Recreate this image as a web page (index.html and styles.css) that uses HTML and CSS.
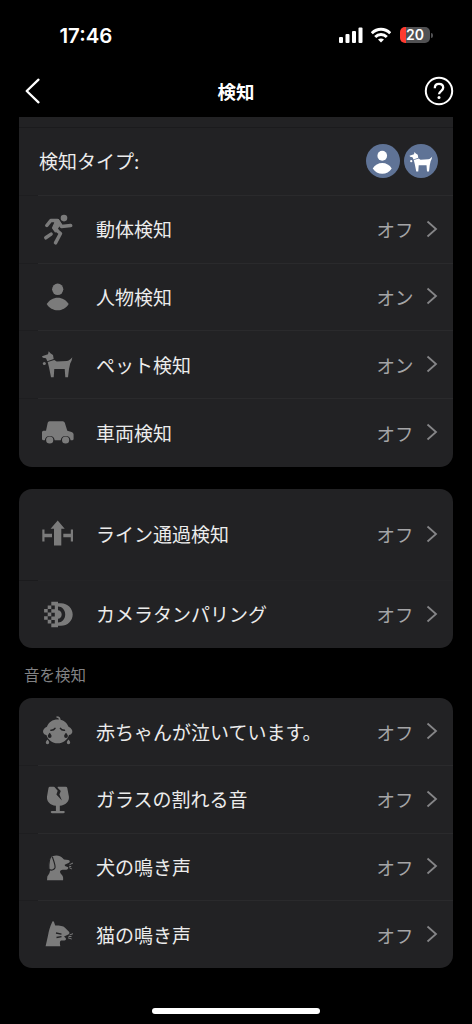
FILE: index.html
```html
<!DOCTYPE html>
<html lang="ja">
<head>
<meta charset="utf-8">
<title>検知</title>
<link rel="stylesheet" href="styles.css">
</head>
<body>
<svg class="defs" width="0" height="0">
  <symbol id="chevron" viewBox="0 0 12 18"><path d="M1.5 1.5 10 9l-8.5 7.5" fill="none" stroke="#858587" stroke-width="1.8"/></symbol>
  <symbol id="person" viewBox="0 0 36 36"><ellipse cx="17.7" cy="11.3" rx="5.6" ry="5.8"/><path d="M6.700 26c2.500-4 6.500-6.300 11-6.300s8.500 2.300 11 6.300c-2.500 4-6.500 6.300-11 6.300S9.200 30 6.700 26Z"/></symbol>
  <symbol id="dog" viewBox="0 0 36 36"><path d="m2 10.300 6-2.100.7-2.900 1.700 1.900 2.600 1.800.7 4-6.400 2.300L6 12.300l-3.200-.5Z"/><circle cx="4.300" cy="17.600" r="1.500"/><path d="m7.700 16 6.600-2 2.400 1.600 10.300-.6c2.500-.4 3.800-2 5.300-3.700-.3 2.500-1 4.500-2.100 6.200L29 23l-1 8.300h-2.700L24.700 23H14.300l-.6 8.300H11L9 21.300Z"/></symbol>
</svg>

<header class="status">
  <span class="time">17:46</span>
  <div class="indicators">
    <svg class="signal" viewBox="0 0 24 16"><rect x="0" y="10" width="4" height="6" rx="1"/><rect x="6.500" y="7" width="4" height="9" rx="1"/><rect x="13" y="4" width="4" height="12" rx="1"/><rect x="19.500" y="0.500" width="4" height="15.500" rx="1"/></svg>
    <svg class="wifi" viewBox="0 0 20 16"><g fill="none" stroke="#fff" stroke-width="2.900"><path d="M.8 6.200C6 .9 14 .9 19.200 6.200"/><path d="M4.200 10c3.300-3.400 8.300-3.400 11.600 0"/></g><path d="M7 12.500c1.700-1.500 4.300-1.500 6 0L10 15.500Z"/></svg>
    <div class="battery"><span>20</span></div>
    <i class="nub"></i>
  </div>
</header>

<nav class="nav">
  <svg class="back" viewBox="0 0 16 26"><path d="M13.500 1.700 1.700 13l11.800 11.300" fill="none" stroke="#fff" stroke-width="2.300" stroke-linecap="round" stroke-linejoin="round"/></svg>
  <h1>検知</h1>
  <svg class="help" viewBox="0 0 30 30" fill="none" stroke="#fff" stroke-width="2"><circle cx="15" cy="15" r="13.200"/><path d="M10.800 12.200c0-2.800 1.700-4.300 4.200-4.300s4.200 1.500 4.200 3.900c0 3.200-4.200 3.300-4.200 6.500" stroke-width="2.300"/><circle cx="15" cy="21.600" r="1.500" fill="#fff" stroke="none"/></svg>
</nav>

<main>
  <section class="card types">
    <div class="row summary">
      <span class="label">検知タイプ:</span>
      <span class="badge"><svg viewBox="0 0 36 36"><use href="#person"/></svg></span>
      <span class="badge"><svg class="dog-badge" viewBox="0 0 36 36"><use href="#dog"/></svg></span>
    </div>
    <div class="row">
      <svg class="icon" viewBox="0 0 36 36"><circle cx="24" cy="7.100" r="3.300"/><path d="M10.500 8h8l3 4.500-3.500 5 1.500 3-4.500 1-3.200-4.500 2.500-5.500Z"/><g fill="none" stroke="#7b7b7b" stroke-width="3.500" stroke-linecap="round" stroke-linejoin="round"><path d="m6.800 14.500 4-5h6.700l4 6 9.200-.9M16.500 11.500l-2 6 6 5-5 9.300M5.800 26.800l5.300-3.700"/></g></svg>
      <span class="label">動体検知</span><span class="value">オフ</span><svg class="go"><use href="#chevron"/></svg>
    </div>
    <div class="row">
      <svg class="icon" viewBox="0 0 36 36"><use href="#person"/></svg>
      <span class="label">人物検知</span><span class="value">オン</span><svg class="go"><use href="#chevron"/></svg>
    </div>
    <div class="row">
      <svg class="icon" viewBox="0 0 36 36"><use href="#dog"/></svg>
      <span class="label">ペット検知</span><span class="value">オン</span><svg class="go"><use href="#chevron"/></svg>
    </div>
    <div class="row">
      <svg class="icon" viewBox="0 0 36 36"><path d="M9.500 7.300h13.300q1.500 0 2 1.500l2.500 8 4.300 1.200q2 .6 2 2.500v4.200q0 1.500-1.500 1.500h-1.500a5 5 0 0 0-9.900 0h-6a5 5 0 0 0-9.900 0H3.500Q2 26.200 2 24.700v-6.500q0-1.500 1.500-1.500h2.500l1.700-7.900q.3-1.500 1.800-1.500Z"/><circle cx="9.700" cy="26" r="3.600"/><circle cx="25.600" cy="26" r="3.600"/></svg>
      <span class="label">車両検知</span><span class="value">オフ</span><svg class="go"><use href="#chevron"/></svg>
    </div>
  </section>

  <section class="card extra">
    <div class="row tall">
      <svg class="icon" viewBox="0 0 36 36"><path d="m17.700 4.500 7 8.300h-3.400v16.700H14V12.800h-3.400Z"/><path d="M2.300 13.500h2.200v4.200h7.500v3.600H4.500v4.200H2.300ZM33 13.500h-2.200v4.200h-7.500v3.600h7.500v4.200H33Z"/></svg>
      <span class="label">ライン通過検知</span><span class="value">オフ</span><svg class="go"><use href="#chevron"/></svg>
    </div>
    <div class="row">
      <svg class="icon" viewBox="0 0 36 36"><path d="M11.300 5.800H18v1.400h3c6.500 0 11.700 5 11.700 11.300S27.500 29.800 21 29.800h-3v1.400h-6.700v-3.600h3.500V24h-3.500v-3.600h3.500v-3.600h-3.500v-3.600h3.500V9.500h-3.500Z"/><path d="M7.700 9.400h3.600V13H7.700Zm0 7.200h3.600v3.600H7.700Zm0 7.200h3.600v3.600H7.700ZM4.100 13h3.600v3.600H4.100Zm0 7.200h3.600v3.600H4.100Z"/><path class="cut" d="M18 10.500c4 0 7.200 3.500 7.200 8s-3.200 8-7.200 8v-3.700c2 0 3.700-1.900 3.700-4.300S20 14.200 18 14.200Z"/></svg>
      <span class="label">カメラタンパリング</span><span class="value">オフ</span><svg class="go"><use href="#chevron"/></svg>
    </div>
  </section>

  <h2>音を検知</h2>

  <section class="card sounds">
    <div class="row">
      <svg class="icon" viewBox="0 0 36 36"><path d="M17.700 6.500c5.200 0 9.200 2.700 10.800 7.300 2.700 1.300 4.300 3.400 3.800 5.400-.4 1.700-1.800 2.600-3.300 2.700-1.500 5-6 8.400-11.300 8.400S7.900 26.900 6.400 21.900c-1.500-.1-2.900-1-3.300-2.700-.5-2 1.100-4.100 3.800-5.400 1.600-4.600 5.600-7.300 10.800-7.300Z"/><path d="M19.500 8c.8-2.600-.4-4-3-4" fill="none" stroke="#7b7b7b" stroke-width="1.700"/><g fill="none" stroke="#222224" stroke-width="1.500" stroke-linecap="round"><path d="M10.900 17.200c1.800.1 3.300-.5 4.100-1.800M20.400 15.400c.8 1.300 2.300 1.900 4.100 1.800"/></g><path class="cut" d="M9.700 19.800c1.300 1.500 1.900 2.600 1.900 3.300a1.900 1.900 0 0 1-3.800 0c0-.7.600-1.800 1.900-3.300ZM26 19.800c1.300 1.500 1.900 2.600 1.900 3.300a1.900 1.900 0 0 1-3.800 0c0-.7.600-1.800 1.900-3.300Z"/><path d="M7.500 26.500c1.200 1.300 1.700 2.300 1.700 3a1.700 1.700 0 0 1-3.400 0c0-.7.500-1.700 1.700-3ZM28.500 26.500c1.200 1.300 1.700 2.300 1.700 3a1.700 1.700 0 0 1-3.400 0c0-.7.500-1.700 1.700-3Z"/></svg>
      <span class="label">赤ちゃんが泣いています。</span><span class="value">オフ</span><svg class="go"><use href="#chevron"/></svg>
    </div>
    <div class="row">
      <svg class="icon" viewBox="0 0 36 36"><path d="M10 5.800h15.800q1.200 0 1.500 1.200l1.600 8.500c.7 4.900-3.400 8.700-9.100 9.300V30h3.700q1.300 0 1.300 1.100T23.500 32.200H12q-1.300 0-1.300-1.100T12 30h3.900v-5.200C10.200 24.200 6.400 20.400 7 15.500l1.500-8.500q.2-1.200 1.500-1.200Z"/><path class="cut" d="M13.600 5h4.300l-.3 1.700 3.200 3.300-1.400 3.500 2.500 6-5.500-6 1.300-3.700Z"/></svg>
      <span class="label">ガラスの割れる音</span><span class="value">オフ</span><svg class="go"><use href="#chevron"/></svg>
    </div>
    <div class="row">
      <svg class="icon" viewBox="0 0 36 36"><path d="M12.500 8.300c3.500-1.500 8-.9 10 1.700l1.500 1.600 4.300.5c1.800.3 1.900 1.800.7 2.600l-4.300 2 .3 1.300 3.200 1.300c.2 1.500-.7 2.300-2 2.400l-3.700.1c-2.500.4-3 1.700-2 3.400l2 2.500c.5.900.8 1.900.6 4.500H7l.3-3.500c.3-1.500 2.200-2.200 2.700-6L9 12Z"/><path d="M11 8.700c-2.400 3-2.300 7.300-2.100 12.300 2 1.900 5 1 6-1 .9-2.300-1.200-7-2.600-11.300" stroke="#222224" stroke-width="1.200"/><path d="m29.500 16.700 3.500-1.700M29.200 18.500h2M29.300 19.700l2.500 1.200" stroke="#7b7b7b" stroke-width="1"/></svg>
      <span class="label">犬の鳴き声</span><span class="value">オフ</span><svg class="go"><use href="#chevron"/></svg>
    </div>
    <div class="row">
      <svg class="icon" viewBox="0 0 36 36"><path d="M5.600 30.300 8 19.500c.8-4.300 1.800-8.400 4.300-13.700.7-.9 1.400-.5 1.700.3l1.200 3.400c5 0 8 .3 9.800 2.200l4 4.100c.8 1.200.5 2.200-.7 2.700l-4.300 1.900 1.700 1.600c.7 1.500 0 2.300-1.400 2.400l-3.200.1c-1.300.6-1.500 2-.8 5.800Z"/><path d="m16 17 5.500 1.100M16.500 21.500l5-.9" stroke="#222224" stroke-width="1.300"/><path d="m29.500 19 3.500-1.300M28.500 20.500h3M28 21.800l3.700 1.200" stroke="#7b7b7b" stroke-width="1"/></svg>
      <span class="label">猫の鳴き声</span><span class="value">オフ</span><svg class="go"><use href="#chevron"/></svg>
    </div>
  </section>
</main>
<footer class="home"></footer>
</body>
</html>
```
FILE: styles.css
```css
* { box-sizing: border-box; }

body {
  margin: 0;
  height: 1024px;
  display: flex;
  flex-direction: column;
  background: #000;
  color: #ececec;
  font-family: "Noto Sans CJK JP", sans-serif;
  overflow: hidden;
}

svg { display: block; flex: none; }
.defs { position: absolute; }

.status {
  height: 70px;
  padding: 0 39px 0 59.5px;
  display: flex;
  align-items: center;
  justify-content: space-between;
}
.time {
  padding-top: 1px;
  font: 600 20.4px/24px Inter, sans-serif;
  color: #fff;
}
.indicators { display: flex; align-items: center; fill: #fff; }
.signal { width: 24px; height: 16px; }
.wifi { width: 20px; height: 16px; margin-left: 8px; }
.battery {
  width: 30px;
  height: 16px;
  margin-left: 9px;
  border-radius: 5px;
  background: linear-gradient(90deg, #ff3b30 6px, #515153 6px);
  color: #fff;
  font: 600 14px/16px Inter, sans-serif;
  text-align: center;
}
.nub { width: 2px; height: 5px; margin-left: 1px; border-radius: 0 2px 2px 0; background: #515153; }

.nav {
  height: 47px;
  padding: 0 18px 6px 25px;
  display: grid;
  grid-template-columns: 30px 1fr 30px;
  align-items: center;
}
.back { width: 16px; height: 26px; }
.help { width: 30px; height: 30px; }
h1 {
  margin: 0 0 0 -7px;
  color: #fff;
  font-size: 18.5px;
  line-height: 28px;
  font-weight: 700;
  text-align: center;
}

main { padding: 0 19px; }
.card { background: #222224; border-radius: 13px; overflow: hidden; }
.types { height: 349.5px; padding-top: 10px; border-radius: 0 0 13px 13px; }
.extra { height: 159px; margin-top: 22px; }
.sounds { height: 270.5px; }

.row {
  height: 67.8px;
  padding: 0 15px 0 20px;
  display: flex;
  align-items: center;
  background: linear-gradient(90deg, #1e1e20 19px, #2a2a2c 19px) top / 100% 1px no-repeat;
}
.sounds .row { height: 67.6px; }
.sounds .row:first-child, .extra .tall { background: none; }
.extra .row + .row { background-image: linear-gradient(90deg, #1b1b1d 19px, #242426 19px); }
.extra .tall { height: 91.5px; }
.summary, .types .summary { background-image: linear-gradient(#1b1b1d, #1b1b1d); }

.icon { width: 36px; height: 36px; margin: 0 20px 0 1px; fill: #7b7b7b; }
.cut { fill: #222224; }
.label { flex: 1; padding-top: 1px; font-size: 19px; line-height: 28px; white-space: nowrap; }
.value { padding-top: 1px; color: #a5a5a7; font-size: 18.5px; line-height: 28px; }
.extra .label, .extra .value { padding-top: 0; }
.go { width: 12px; height: 18px; margin-left: 12.5px; }

.badge {
  width: 34px;
  height: 34px;
  margin: 1px 0 0 4.5px;
  border-radius: 50%;
  background: #5f7396;
  display: flex;
  align-items: center;
  justify-content: center;
  fill: #fff;
}
.badge svg { width: 31px; height: 31px; }
.badge .dog-badge { width: 27px; height: 27px; }

h2 {
  margin: 0;
  height: 50px;
  padding: 12px 5px 0;
  color: #828284;
  font-size: 15.5px;
  line-height: 28px;
  font-weight: 400;
}

.home { width: 168px; height: 6px; margin: auto auto 10px; border-radius: 3px; background: #fff; }
```
